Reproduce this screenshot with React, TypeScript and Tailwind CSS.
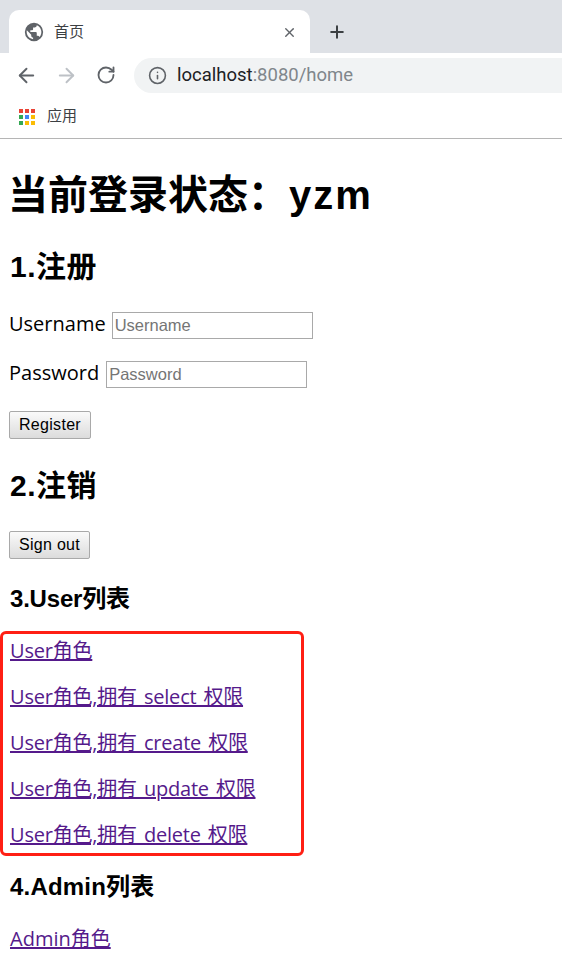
import React from 'react';
import { ArrowLeft, ArrowRight, RotateCw, Info, X, Plus } from 'lucide-react';

const UI_FONT = "font-['Roboto','Noto_Sans_CJK_SC',sans-serif]";
const PAGE_FONT = "font-['Open_Sans','Noto_Sans_CJK_SC',sans-serif]";
const CONTROL_FONT = "font-['Liberation_Sans','Noto_Sans_CJK_SC',sans-serif]";
const HEADING_FONT = "font-['Liberation_Sans','Noto_Sans_CJK_SC',sans-serif]";

/* ── Browser chrome ──────────────────────────────── */

function GlobeIcon() {
  return (
    <svg width="22" height="22" viewBox="0 0 24 24" className="shrink-0">
      <path
        fill="#5f6368"
        d="M12 2a10 10 0 1 0 0 20 10 10 0 0 0 0-20zm-1 17.900A8 8 0 0 1 4.200 10.200L9 15v1c0 1.100.9 2 2 2v1.900zm6.900-2.500A2 2 0 0 0 16 16h-1v-3a1 1 0 0 0-1-1H8v-2h2a1 1 0 0 0 1-1V7h2a2 2 0 0 0 2-2v-.4a8 8 0 0 1 2.900 12.800z"
      />
    </svg>
  );
}

function AppsIcon() {
  const colors = ['#ea4335', '#ea4335', '#ea4335', '#34a853', '#4285f4', '#fbbc04', '#34a853', '#fbbc04', '#fbbc04'];
  return (
    <div className="grid grid-cols-[4px_4px_4px] gap-[2px] w-[16px] h-[16px] shrink-0">
      {colors.map((c, i) => (
        <svg key={i} width="4" height="4" viewBox="0 0 4 4" className="block">
          <rect width="4" height="4" fill={c} />
        </svg>
      ))}
    </div>
  );
}

function BrowserChrome() {
  return (
    <div className={UI_FONT}>
      <div className="h-[53px] bg-[#dee1e6] flex items-end pl-[9px]">
        <div className="w-[301px] h-[43px] bg-white rounded-t-[10px] flex items-center pl-[14px] pr-[13px] pt-[1px]">
          <GlobeIcon />
          <span className="ml-[9px] text-[15px] text-[#3c4043]">首页</span>
          <X size={15} strokeWidth={2.2} className="ml-auto text-[#5f6368]" />
        </div>
        <div className="h-[43px] flex items-center pl-[17px] pt-[1px]">
          <Plus size={20} strokeWidth={2.4} className="text-[#3c4043]" />
        </div>
      </div>
      <div className="h-[44px] flex items-center pl-[15px]">
        <ArrowLeft size={23} strokeWidth={2} className="text-[#5f6368]" />
        <ArrowRight size={23} strokeWidth={2} className="ml-[17px] text-[#bdc1c6]" />
        <RotateCw size={20} strokeWidth={2.2} className="ml-[18px] text-[#5f6368]" />
        <div className="ml-[18px] flex-1 h-[35px] bg-[#f1f3f4] rounded-l-full flex items-center pl-[14px]">
          <Info size={19} strokeWidth={2} className="text-[#5f6368]" />
          <span className="ml-[10px] pt-[2px] text-[18.500px] text-[#202124]">
            localhost<span className="text-[#80868b]">:8080/home</span>
          </span>
        </div>
      </div>
      <div className="h-[42px] flex items-center pl-[19px] pb-[2px] border-b border-[#b5b5b5]">
        <AppsIcon />
        <span className="ml-[12px] text-[15px] text-[#3c4043]">应用</span>
      </div>
    </div>
  );
}

/* ── Page ────────────────────────────────────────── */

function Field({ label, gapClass }: { label: string; gapClass: string }) {
  return (
    <div className="mt-[21px] h-[28px] flex items-center pl-[9px] first:mt-[23px]">
      <span className="pb-[2px] text-[20px] text-black">{label}</span>
      <input
        placeholder={label}
        className={`${gapClass} w-[201px] h-[27px] border border-[#a9a9a9] px-[2px] text-[16.500px] placeholder:text-[#757575] ${CONTROL_FONT}`}
      />
    </div>
  );
}

function PageButton({ label, widthClass }: { label: string; widthClass: string }) {
  return (
    <button className={`h-[28px] ${widthClass} border border-[#a9a9a9] rounded-[2px] bg-gradient-to-b from-[#fafafa] to-[#dcdcdc] text-[16px] tracking-[0.3px] text-black ${CONTROL_FONT}`}>
      {label}
    </button>
  );
}

function RoleLink({ label }: { label: string }) {
  return (
    <a href="#" className="block h-[46px] pl-[7px] text-[20px] leading-[33px] tracking-[-0.2px] [word-spacing:2px] text-[#551a8b]">
      <span className="underline">{label}</span>
    </a>
  );
}

export default function App() {
  return (
    <div className="w-[562px] h-[970px] overflow-hidden bg-white">
      <BrowserChrome />
      <main className={PAGE_FONT}>
        <h1 className={`mt-[30px] pl-[8px] text-[40px] leading-[52px] font-bold text-black ${HEADING_FONT}`}>
          当前登录状态：<span className="pl-[1px] tracking-[2px]">yzm</span>
        </h1>
        <h2 className={`mt-[25px] pl-[10px] text-[30px] leading-[42px] font-bold tracking-[0.5px] text-black ${HEADING_FONT}`}>1.注册</h2>
        <div>
          <Field label="Username" gapClass="ml-[6px]" />
          <Field label="Password" gapClass="ml-[7px]" />
        </div>
        <div className="mt-[23px] pl-[9px]"><PageButton label="Register" widthClass="w-[82px]" /></div>
        <h2 className={`mt-[26px] pl-[10px] text-[30px] leading-[42px] font-bold tracking-[0.5px] text-black ${HEADING_FONT}`}>2.注销</h2>
        <div className="mt-[24px] pl-[9px]"><PageButton label="Sign out" widthClass="w-[81px]" /></div>
        <h3 className={`mt-[24px] pl-[10px] text-[24px] leading-[32px] font-bold tracking-[-0.2px] text-black ${HEADING_FONT}`}>3.User列表</h3>
        <div className="mt-[16px] w-[304px] h-[225px] border-[3px] border-[#ff1f14] rounded-[6px]">
          <RoleLink label="User角色" />
          <RoleLink label="User角色,拥有 select 权限" />
          <RoleLink label="User角色,拥有 create 权限" />
          <RoleLink label="User角色,拥有 update 权限" />
          <RoleLink label="User角色,拥有 delete 权限" />
        </div>
        <h3 className={`mt-[15px] pl-[10px] text-[24px] leading-[32px] font-bold tracking-[0.2px] text-black ${HEADING_FONT}`}>4.Admin列表</h3>
        <a href="#" className="block mt-[19px] pl-[10px] text-[20px] leading-[33px] text-[#551a8b]">
          <span className="underline">Admin角色</span>
        </a>
      </main>
    </div>
  );
}
